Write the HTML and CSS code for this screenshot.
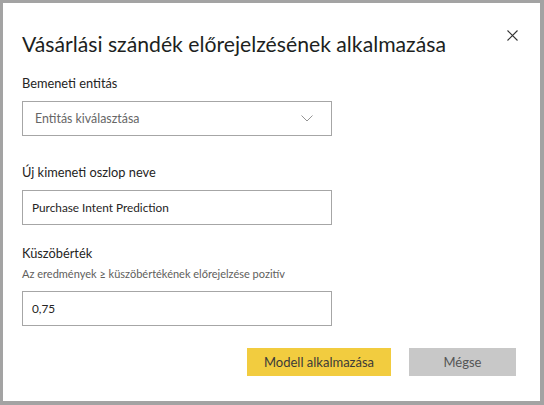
FILE: index.html
```html
<!DOCTYPE html>
<html lang="hu">
<head>
<meta charset="utf-8">
<link rel="stylesheet" href="styles.css">
</head>
<body>
<div class="dialog">
  <div class="header">
    <h1 class="title">Vásárlási szándék előrejelzésének alkalmazása</h1>
    <button class="close" aria-label="Bezárás">
      <svg width="11" height="11" viewBox="0 0 11 11"><path d="M0.5 0.5 L10.5 10.5 M10.5 0.5 L0.5 10.5" stroke="#333" stroke-width="1.1" fill="none"/></svg>
    </button>
  </div>
  <div class="field">
    <label class="label">Bemeneti entitás</label>
    <div class="select">
      <span class="placeholder">Entitás kiválasztása</span>
      <svg class="chevron" width="12" height="7" viewBox="0 0 12 7"><path d="M0.5 0.5 L6 6 L11.5 0.5" stroke="#888" stroke-width="0.9" fill="none"/></svg>
    </div>
  </div>
  <div class="field">
    <label class="label">Új kimeneti oszlop neve</label>
    <div class="input">Purchase Intent Prediction</div>
  </div>
  <div class="field">
    <label class="label">Küszöbérték</label>
    <div class="hint">Az eredmények ≥ küszöbértékének előrejelzése pozitív</div>
    <div class="input">0,75</div>
  </div>
  <div class="actions">
    <button class="btn primary">Modell alkalmazása</button>
    <button class="btn secondary">Mégse</button>
  </div>
</div>
</body>
</html>
```
FILE: styles.css
```css
* { box-sizing: border-box; }
html, body { margin: 0; padding: 0; background: #fff; }
body {
  font-family: Lato, "Noto Sans", sans-serif;
  color: #252423;
}
.dialog {
  width: 544px;
  height: 405px;
  border-style: solid;
  border-color: #a3a3a3;
  border-width: 3px 4px 4px 3px;
  background: #fff;
  padding: 0 0 0 19px;
  display: flex;
  flex-direction: column;
}
.header {
  display: flex;
  align-items: flex-start;
  justify-content: space-between;
  padding-top: 26px;
}
.title {
  margin: 0;
  font-size: 21.2px;
  font-weight: 400;
  line-height: 30px;
  color: #201f1e;
}
.close {
  border: 0;
  background: transparent;
  padding: 0;
  margin: 1px 22px 0 0;
  width: 11px;
  height: 11px;
  display: flex;
}
.field {
  display: flex;
  flex-direction: column;
}
.label {
  font-size: 12.8px;
  line-height: 18px;
  color: #252423;
}
.field:nth-of-type(2) .label { margin-top: 15px; }
.field:nth-of-type(3) .label { margin-top: 27px; }
.field:nth-of-type(4) .label { margin-top: 19px; }
.select, .input {
  width: 310px;
  height: 35px;
  border: 1px solid #a6a6a6;
  font-size: 11.8px;
  display: flex;
  align-items: center;
  margin-top: 9px;
}
.select {
  justify-content: space-between;
  padding: 0 18px 0 12px;
}
.placeholder { color: #666; font-size: 12.4px; }
.input { padding: 0 9px; color: #252423; }
.hint {
  font-size: 11px;
  line-height: 14px;
  color: #605e5c;
  margin-top: 5px;
  margin-bottom: 1px;
}
.actions {
  display: flex;
  justify-content: flex-end;
  gap: 18px;
  margin-top: 22px;
  padding-right: 24px;
}
.btn {
  border: 0;
  height: 28px;
  font-family: inherit;
  font-size: 13px;
  color: #3b3a39;
  padding: 0;
}
.primary { background: #f2cc3f; width: 144px; }
.secondary { background: #c8c8c8; width: 107px; color: #555; }
```
